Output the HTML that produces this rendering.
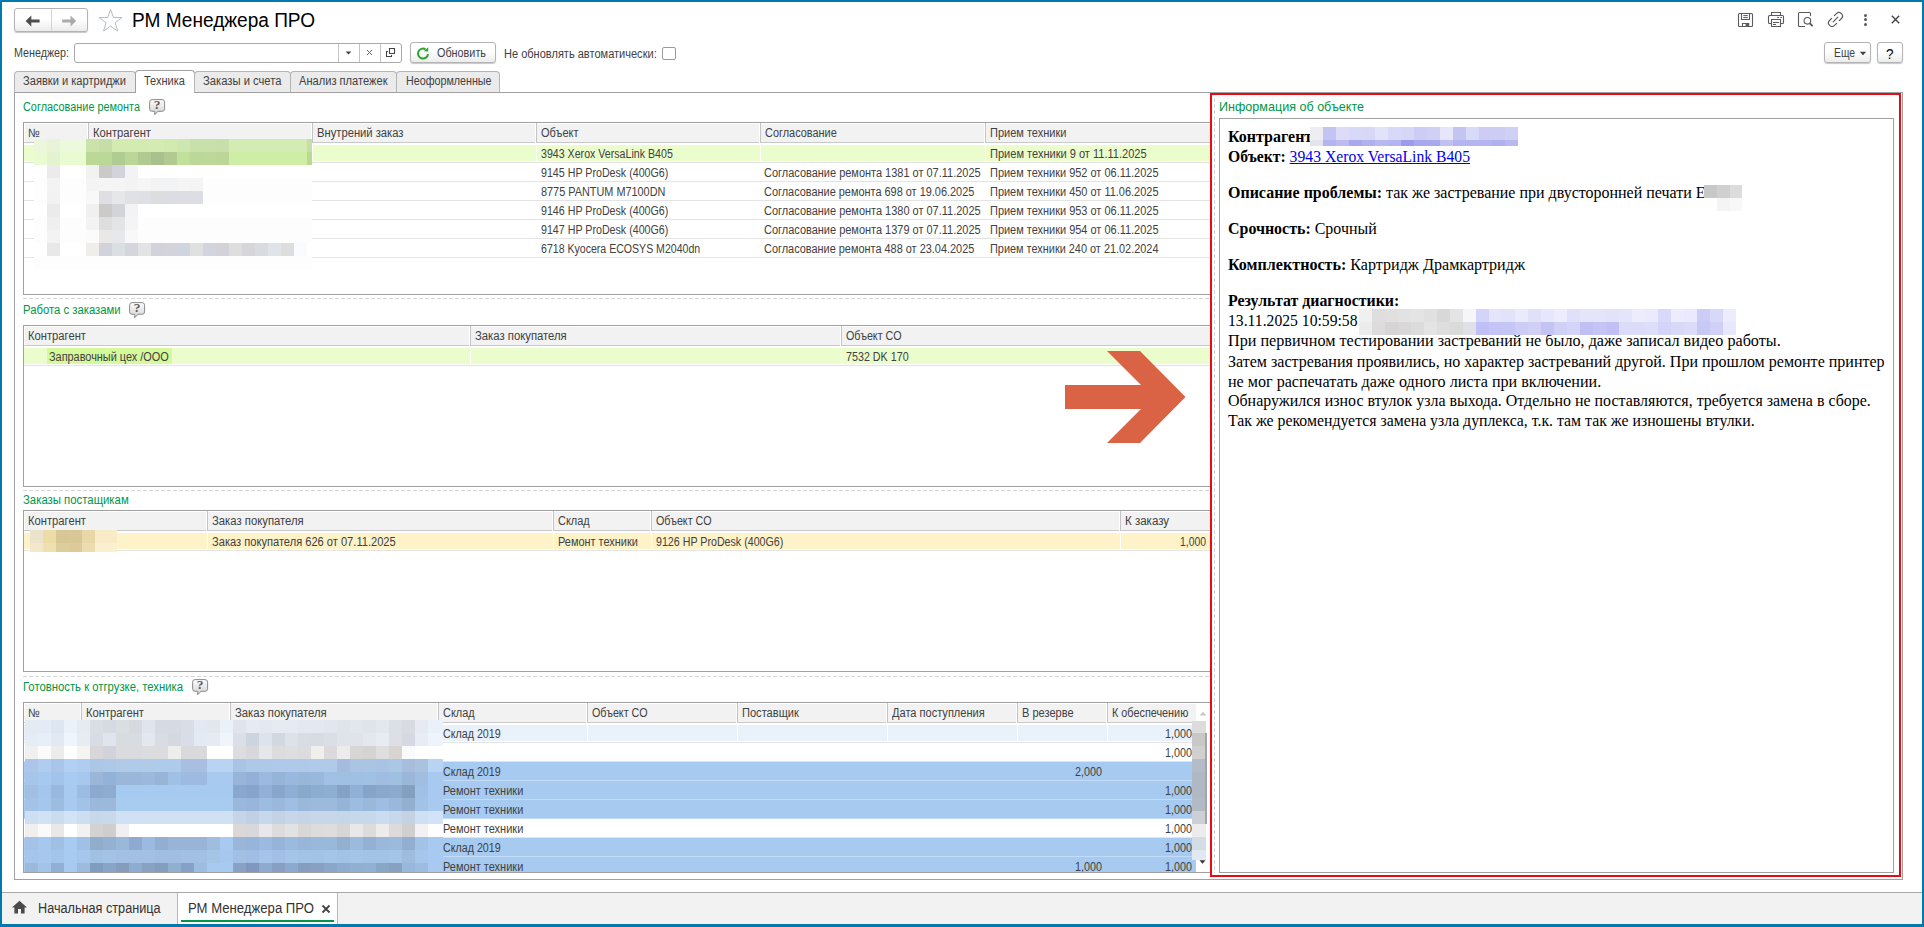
<!DOCTYPE html>
<html lang="ru"><head><meta charset="utf-8"><title>РМ Менеджера ПРО</title>
<style>
html,body{margin:0;padding:0;}
body{width:1924px;height:927px;overflow:hidden;background:#fff;font-family:"Liberation Sans",sans-serif;font-size:11px;color:#333;}
#root{position:relative;width:1924px;height:927px;overflow:hidden;background:#fff;}
#root div, #root svg{position:absolute;box-sizing:border-box;}
.t{white-space:nowrap;}
.btn{border:1px solid #b3b3b3;border-radius:3px;background:linear-gradient(#ffffff,#ffffff 45%,#ececec);box-shadow:0 1px 1px rgba(0,0,0,.22);}
a{color:#0000ee;text-decoration:underline;}
</style></head><body><div id="root">

<div style="left:0px;top:0px;width:1924px;height:2px;background:#0079ae"></div>
<div style="left:0px;top:0px;width:2px;height:927px;background:#0079ae"></div>
<div style="left:1922px;top:0px;width:2px;height:927px;background:#0079ae"></div>
<div style="left:0px;top:924px;width:1924px;height:3px;background:#0079ae"></div>
<div class="btn" style="left:14px;top:8px;width:74px;height:24px;"></div>
<div style="left:51px;top:9px;width:1px;height:22px;background:#d4d4d4"></div>
<svg style="left:25px;top:14.5px" width="16" height="12" viewBox="0 0 16 12"><path d="M0.6 6 L6.3 0.4 V4.6 H14.6 V7.4 H6.3 V11.6 Z" fill="#4d4d4d"/></svg>
<svg style="left:61px;top:14.5px" width="16" height="12" viewBox="0 0 16 12"><path d="M15.2 6 L9.5 0.4 V4.6 H1.2 V7.4 H9.5 V11.6 Z" fill="#ababab"/></svg>
<svg style="left:98px;top:8px" width="26" height="26" viewBox="0 0 26 26"><path d="M12.60 1.30 L15.42 9.42 L24.01 9.59 L17.17 14.78 L19.65 23.01 L12.60 18.10 L5.55 23.01 L8.03 14.78 L1.19 9.59 L9.78 9.42 Z" fill="#fff" stroke="#b4bcc3" stroke-width="1"/></svg>
<div class="t" style="left:132px;top:9px;font-size:20px;line-height:22px;color:#000;transform:scaleX(0.9537);transform-origin:0 0;">РМ Менеджера ПРО</div>
<svg style="left:1737px;top:12px" width="17" height="16" viewBox="0 0 17 16" fill="none" stroke="#5a5a5a" stroke-width="1.1"><path d="M2.5 1.5 H14.5 Q15.5 1.5 15.5 2.5 V13.5 Q15.5 14.5 14.5 14.5 H2.5 Q1.5 14.5 1.5 13.5 V2.5 Q1.5 1.5 2.5 1.5 Z"/><path d="M4.5 1.5 V7.5 H12.5 V1.5"/><path d="M6.3 3.6 H10.8 M6.3 5.6 H10.8" stroke-width="1"/><path d="M5.5 14.5 V11.5 H11.7 V14.5"/><rect x="8.6" y="11.5" width="3.1" height="3" fill="#5a5a5a" stroke="none"/></svg>
<svg style="left:1767px;top:11px" width="18" height="17" viewBox="0 0 18 17" fill="none" stroke="#5a5a5a" stroke-width="1.1"><path d="M4.5 4.5 V1.5 H13.5 V4.5"/><path d="M4.5 12.5 H2.5 Q1.5 12.5 1.5 11.5 V5.5 Q1.5 4.5 2.5 4.5 H15.5 Q16.5 4.5 16.5 5.5 V11.5 Q16.5 12.5 15.5 12.5 H13.5"/><path d="M4.5 8.5 H13.5 V15.5 H4.5 Z"/><path d="M6 11.5 H12 M6 13.5 H9" stroke-width="1"/><path d="M10.2 6.5 H12 M13.3 6.5 H15" stroke-width="1"/></svg>
<svg style="left:1797px;top:11px" width="17" height="17" viewBox="0 0 17 17" fill="none" stroke="#5a5a5a" stroke-width="1.1"><path d="M8 15.5 H2.5 Q1.5 15.5 1.5 14.5 V2.5 Q1.5 1.5 2.5 1.5 H12.5 Q13.5 1.5 13.5 2.5 V5"/><circle cx="10.4" cy="9.8" r="3.3"/><path d="M12.8 12.3 L15.6 15.2" stroke-width="1.8"/></svg>
<svg style="left:1826px;top:10px" width="19" height="19" viewBox="0 0 19 19" fill="none" stroke="#5a5a5a" stroke-width="1.2" stroke-linecap="round" stroke-linejoin="round"><g transform="rotate(-45 9.5 9.5)"><path d="M7.6 6 H4.6 Q1.1 6 1.1 9.5 Q1.1 13 4.6 13 H7.6"/><path d="M11.4 6 H14.4 Q17.9 6 17.9 9.5 Q17.9 13 14.4 13 H11.4"/><path d="M6.2 9.5 H12.8"/></g></svg>
<div style="left:1864px;top:14px;width:3px;height:3px;background:#5a5a5a;border-radius:50%"></div>
<div style="left:1864px;top:18px;width:3px;height:3px;background:#5a5a5a;border-radius:50%"></div>
<div style="left:1864px;top:23px;width:3px;height:3px;background:#5a5a5a;border-radius:50%"></div>
<svg style="left:1890px;top:14px" width="11" height="11" viewBox="0 0 11 11" stroke="#444" stroke-width="1.4" fill="none"><path d="M1.8 1.8 L9.2 9.2 M9.2 1.8 L1.8 9.2"/></svg>
<div class="t" style="left:14px;top:46px;font-size:12px;line-height:14px;color:#414141;transform:scaleX(0.8934);transform-origin:0 0;">Менеджер:</div>
<div style="left:74px;top:43px;width:328px;height:20px;border:1px solid #a9a9a9;border-radius:3px;background:#fff;"></div>
<div style="left:338px;top:44px;width:1px;height:18px;background:#c4c4c4"></div>
<div style="left:359px;top:44px;width:1px;height:18px;background:#c4c4c4"></div>
<div style="left:380px;top:44px;width:1px;height:18px;background:#c4c4c4"></div>
<svg style="left:345px;top:51px" width="7" height="4" viewBox="0 0 7 4"><path d="M0.6 0.4 H6.4 L3.5 3.6 Z" fill="#444"/></svg>
<svg style="left:366px;top:49px" width="7" height="7" viewBox="0 0 7 7" stroke="#666" stroke-width="1"><path d="M1 1 L6 6 M6 1 L1 6"/></svg>
<svg style="left:385px;top:47px" width="11" height="11" viewBox="0 0 11 11" fill="none" stroke="#444" stroke-width="1.1"><path d="M4.5 1.5 H9.5 V6.5 H4.5 Z"/><path d="M3 4.5 H1.5 V9.5 H6.5 V8"/></svg>
<div class="btn" style="left:410px;top:42px;width:86px;height:21px;"></div>
<svg style="left:415px;top:45.5px" width="16" height="16" viewBox="0 0 16 16" fill="none"><path d="M12.98 8.04 A5 5 0 1 1 10.5 3.27" stroke="#2ba42f" stroke-width="2"/><path d="M8.9 5.2 L13.2 5.6 L13.2 1.3 Z" fill="#2ba42f"/></svg>
<div class="t" style="left:437px;top:46px;font-size:12px;line-height:14px;color:#414141;transform:scaleX(0.9017);transform-origin:0 0;">Обновить</div>
<div class="t" style="left:504.3px;top:47px;font-size:12px;line-height:14px;color:#414141;transform:scaleX(0.9193);transform-origin:0 0;">Не обновлять автоматически:</div>
<div style="left:662px;top:47px;width:14px;height:13px;border:1px solid #9a9a9a;border-radius:2px;background:#fff;"></div>
<div class="btn" style="left:1824px;top:42px;width:47px;height:21px;"></div>
<div class="t" style="left:1834px;top:46px;font-size:12px;line-height:14px;color:#414141;transform:scaleX(0.8599);transform-origin:0 0;">Еще</div>
<svg style="left:1859px;top:51px" width="8" height="5" viewBox="0 0 8 5"><path d="M0.8 0.8 H7.2 L4 4.2 Z" fill="#444"/></svg>
<div class="btn" style="left:1877px;top:42px;width:26px;height:21px;"></div>
<div class="t" style="left:1886px;top:45px;font-size:15px;line-height:17px;color:#000;transform:scaleX(0.9000);transform-origin:0 0;">?</div>
<div style="left:14px;top:92px;width:1889px;height:788px;border:1px solid #a0a0a0;background:#fff;"></div>
<div style="left:14px;top:71px;width:122px;height:22px;border:1px solid #b4b4b4;border-bottom:1px solid #a0a0a0;border-radius:4px 4px 0 0;background:#ebebeb;"></div>
<div style="left:135px;top:70px;width:60px;height:23px;border:1px solid #a0a0a0;border-bottom:none;border-radius:4px 4px 0 0;background:#fff;"></div>
<div style="left:194px;top:71px;width:97px;height:22px;border:1px solid #b4b4b4;border-bottom:1px solid #a0a0a0;border-radius:4px 4px 0 0;background:#ebebeb;"></div>
<div style="left:290px;top:71px;width:107px;height:22px;border:1px solid #b4b4b4;border-bottom:1px solid #a0a0a0;border-radius:4px 4px 0 0;background:#ebebeb;"></div>
<div style="left:396px;top:71px;width:104px;height:22px;border:1px solid #b4b4b4;border-bottom:1px solid #a0a0a0;border-radius:4px 4px 0 0;background:#ebebeb;"></div>
<div class="t" style="left:23px;top:74px;font-size:12px;line-height:14px;color:#414141;transform:scaleX(0.9252);transform-origin:0 0;">Заявки и картриджи</div>
<div class="t" style="left:144px;top:74px;font-size:12px;line-height:14px;color:#414141;transform:scaleX(0.9194);transform-origin:0 0;">Техника</div>
<div class="t" style="left:203px;top:74px;font-size:12px;line-height:14px;color:#414141;transform:scaleX(0.9356);transform-origin:0 0;">Заказы и счета</div>
<div class="t" style="left:299px;top:74px;font-size:12px;line-height:14px;color:#414141;transform:scaleX(0.9256);transform-origin:0 0;">Анализ платежек</div>
<div class="t" style="left:405.5px;top:74px;font-size:12px;line-height:14px;color:#414141;transform:scaleX(0.8932);transform-origin:0 0;">Неоформленные</div>
<div class="t" style="left:23px;top:100px;font-size:12px;line-height:14px;color:#009646;transform:scaleX(0.9061);transform-origin:0 0;">Согласование ремонта</div>
<svg style="left:149px;top:99px" width="17" height="17" viewBox="0 0 17 17"><defs><linearGradient id="hg14999" x1="0" y1="0" x2="0" y2="1"><stop offset="0" stop-color="#fdfdfd"/><stop offset="1" stop-color="#d2d2d2"/></linearGradient></defs><path d="M3 0.6 H13 Q15.6 0.6 15.6 3.2 V9.8 Q15.6 12.3 13 12.3 H8.8 Q7.6 14.6 5.4 15.6 Q6 14 5.8 12.3 H3 Q0.6 12.3 0.6 9.8 V3.2 Q0.6 0.6 3 0.6 Z" fill="url(#hg14999)" stroke="#8a8a8a" stroke-width="1"/><text x="8.2" y="10.4" text-anchor="middle" font-family="Liberation Serif, serif" font-weight="bold" font-size="13.5" fill="#5e5e5e">?</text></svg>
<div style="left:23px;top:122px;width:1189px;height:173px;border:1px solid #a0a0a0;background:#fff;"></div>
<div style="left:25px;top:124px;width:1185px;height:18px;background:#f2f2f2"></div>
<div style="left:24px;top:142px;width:1186px;height:1px;background:#c9c9c9"></div>
<div class="t" style="left:28px;top:126px;font-size:12px;line-height:14px;color:#414141;transform:scaleX(0.9200);transform-origin:0 0;">№</div>
<div style="left:87px;top:123px;width:1px;height:20px;background:#fff"></div>
<div style="left:88px;top:123px;width:1px;height:20px;background:#c4c4c4"></div>
<div class="t" style="left:92.5px;top:126px;font-size:12px;line-height:14px;color:#414141;transform:scaleX(0.9348);transform-origin:0 0;">Контрагент</div>
<div style="left:311px;top:123px;width:1px;height:20px;background:#fff"></div>
<div style="left:312px;top:123px;width:1px;height:20px;background:#c4c4c4"></div>
<div class="t" style="left:316.5px;top:126px;font-size:12px;line-height:14px;color:#414141;transform:scaleX(0.9343);transform-origin:0 0;">Внутрений заказ</div>
<div style="left:535px;top:123px;width:1px;height:20px;background:#fff"></div>
<div style="left:536px;top:123px;width:1px;height:20px;background:#c4c4c4"></div>
<div class="t" style="left:540.5px;top:126px;font-size:12px;line-height:14px;color:#414141;transform:scaleX(0.9174);transform-origin:0 0;">Объект</div>
<div style="left:759px;top:123px;width:1px;height:20px;background:#fff"></div>
<div style="left:760px;top:123px;width:1px;height:20px;background:#c4c4c4"></div>
<div class="t" style="left:764.5px;top:126px;font-size:12px;line-height:14px;color:#414141;transform:scaleX(0.9105);transform-origin:0 0;">Согласование</div>
<div style="left:984px;top:123px;width:1px;height:20px;background:#fff"></div>
<div style="left:985px;top:123px;width:1px;height:20px;background:#c4c4c4"></div>
<div class="t" style="left:989.5px;top:126px;font-size:12px;line-height:14px;color:#414141;transform:scaleX(0.9169);transform-origin:0 0;">Прием техники</div>
<div style="left:24px;top:145px;width:1186px;height:16px;background:#ebfdcd"></div>
<div style="left:24px;top:162px;width:1186px;height:1px;background:#e3e3e3"></div>
<div style="left:88px;top:145px;width:1px;height:17px;background:#fff"></div>
<div style="left:312px;top:145px;width:1px;height:17px;background:#fff"></div>
<div style="left:536px;top:145px;width:1px;height:17px;background:#fff"></div>
<div style="left:760px;top:145px;width:1px;height:17px;background:#fff"></div>
<div style="left:985px;top:145px;width:1px;height:17px;background:#fff"></div>
<div class="t" style="left:541.2px;top:147px;font-size:12px;line-height:14px;color:#414141;transform:scaleX(0.8859);transform-origin:0 0;">3943 Xerox VersaLink B405</div>
<div class="t" style="left:990.3px;top:147px;font-size:12px;line-height:14px;color:#414141;transform:scaleX(0.9202);transform-origin:0 0;">Прием техники 9 от 11.11.2025</div>
<div style="left:24px;top:181px;width:1186px;height:1px;background:#e3e3e3"></div>
<div class="t" style="left:541.2px;top:166px;font-size:12px;line-height:14px;color:#414141;transform:scaleX(0.8890);transform-origin:0 0;">9145 HP ProDesk (400G6)</div>
<div class="t" style="left:764.4px;top:166px;font-size:12px;line-height:14px;color:#414141;transform:scaleX(0.9143);transform-origin:0 0;">Согласование ремонта 1381 от 07.11.2025</div>
<div class="t" style="left:990.3px;top:166px;font-size:12px;line-height:14px;color:#414141;transform:scaleX(0.9137);transform-origin:0 0;">Прием техники 952 от 06.11.2025</div>
<div style="left:24px;top:200px;width:1186px;height:1px;background:#e3e3e3"></div>
<div class="t" style="left:541.2px;top:185px;font-size:12px;line-height:14px;color:#414141;transform:scaleX(0.9069);transform-origin:0 0;">8775 PANTUM M7100DN</div>
<div class="t" style="left:764.4px;top:185px;font-size:12px;line-height:14px;color:#414141;transform:scaleX(0.9099);transform-origin:0 0;">Согласование ремонта 698 от 19.06.2025</div>
<div class="t" style="left:990.3px;top:185px;font-size:12px;line-height:14px;color:#414141;transform:scaleX(0.9137);transform-origin:0 0;">Прием техники 450 от 11.06.2025</div>
<div style="left:24px;top:219px;width:1186px;height:1px;background:#e3e3e3"></div>
<div class="t" style="left:541.2px;top:204px;font-size:12px;line-height:14px;color:#414141;transform:scaleX(0.8890);transform-origin:0 0;">9146 HP ProDesk (400G6)</div>
<div class="t" style="left:764.4px;top:204px;font-size:12px;line-height:14px;color:#414141;transform:scaleX(0.9143);transform-origin:0 0;">Согласование ремонта 1380 от 07.11.2025</div>
<div class="t" style="left:990.3px;top:204px;font-size:12px;line-height:14px;color:#414141;transform:scaleX(0.9137);transform-origin:0 0;">Прием техники 953 от 06.11.2025</div>
<div style="left:24px;top:238px;width:1186px;height:1px;background:#e3e3e3"></div>
<div class="t" style="left:541.2px;top:223px;font-size:12px;line-height:14px;color:#414141;transform:scaleX(0.8890);transform-origin:0 0;">9147 HP ProDesk (400G6)</div>
<div class="t" style="left:764.4px;top:223px;font-size:12px;line-height:14px;color:#414141;transform:scaleX(0.9143);transform-origin:0 0;">Согласование ремонта 1379 от 07.11.2025</div>
<div class="t" style="left:990.3px;top:223px;font-size:12px;line-height:14px;color:#414141;transform:scaleX(0.9137);transform-origin:0 0;">Прием техники 954 от 06.11.2025</div>
<div style="left:24px;top:257px;width:1186px;height:1px;background:#e3e3e3"></div>
<div class="t" style="left:541.2px;top:242px;font-size:12px;line-height:14px;color:#414141;transform:scaleX(0.8806);transform-origin:0 0;">6718 Kyocera ECOSYS M2040dn</div>
<div class="t" style="left:764.4px;top:242px;font-size:12px;line-height:14px;color:#414141;transform:scaleX(0.9099);transform-origin:0 0;">Согласование ремонта 488 от 23.04.2025</div>
<div class="t" style="left:990.3px;top:242px;font-size:12px;line-height:14px;color:#414141;transform:scaleX(0.9093);transform-origin:0 0;">Прием техники 240 от 21.02.2024</div>
<div style="left:34px;top:139px;width:13px;height:13px;background:#ebf6dd"></div>
<div style="left:47px;top:139px;width:13px;height:13px;background:#e9f3da"></div>
<div style="left:60px;top:139px;width:26px;height:13px;background:#edf9dc"></div>
<div style="left:86px;top:139px;width:13px;height:13px;background:#cbe2ab"></div>
<div style="left:99px;top:139px;width:13px;height:13px;background:#c6dda8"></div>
<div style="left:112px;top:139px;width:39px;height:13px;background:#d3ebb0"></div>
<div style="left:151px;top:139px;width:13px;height:13px;background:#d4ebb2"></div>
<div style="left:164px;top:139px;width:13px;height:13px;background:#d2e9b0"></div>
<div style="left:177px;top:139px;width:13px;height:13px;background:#cee6b0"></div>
<div style="left:190px;top:139px;width:26px;height:13px;background:#c9e0ab"></div>
<div style="left:216px;top:139px;width:13px;height:13px;background:#c8dfaa"></div>
<div style="left:229px;top:139px;width:78px;height:13px;background:#d4ebb3"></div>
<div style="left:307px;top:139px;width:5px;height:13px;background:#c5dfa4"></div>
<div style="left:34px;top:152px;width:13px;height:13px;background:#e9fbd0"></div>
<div style="left:47px;top:152px;width:13px;height:13px;background:#e4f3cf"></div>
<div style="left:60px;top:152px;width:26px;height:13px;background:#e9fbd0"></div>
<div style="left:86px;top:152px;width:13px;height:13px;background:#bcd897"></div>
<div style="left:99px;top:152px;width:13px;height:13px;background:#bbd996"></div>
<div style="left:112px;top:152px;width:13px;height:13px;background:#b0cd91"></div>
<div style="left:125px;top:152px;width:13px;height:13px;background:#bbd697"></div>
<div style="left:138px;top:152px;width:13px;height:13px;background:#b0ca93"></div>
<div style="left:151px;top:152px;width:13px;height:13px;background:#a8c18f"></div>
<div style="left:164px;top:152px;width:13px;height:13px;background:#b2ca92"></div>
<div style="left:177px;top:152px;width:13px;height:13px;background:#c0e09c"></div>
<div style="left:190px;top:152px;width:13px;height:13px;background:#bcd898"></div>
<div style="left:203px;top:152px;width:13px;height:13px;background:#bcd99a"></div>
<div style="left:216px;top:152px;width:13px;height:13px;background:#bbd698"></div>
<div style="left:229px;top:152px;width:78px;height:13px;background:#cdeea4"></div>
<div style="left:307px;top:152px;width:5px;height:13px;background:#b9db8c"></div>
<div style="left:34px;top:165px;width:13px;height:13px;background:#ffffff"></div>
<div style="left:47px;top:165px;width:13px;height:13px;background:#ebebeb"></div>
<div style="left:60px;top:165px;width:26px;height:13px;background:#ffffff"></div>
<div style="left:86px;top:165px;width:13px;height:13px;background:#f2f2f2"></div>
<div style="left:99px;top:165px;width:13px;height:13px;background:#cbcac8"></div>
<div style="left:112px;top:165px;width:13px;height:13px;background:#d2d4d9"></div>
<div style="left:125px;top:165px;width:13px;height:13px;background:#f3f2f4"></div>
<div style="left:138px;top:165px;width:174px;height:13px;background:#ffffff"></div>
<div style="left:34px;top:178px;width:13px;height:13px;background:#fdfdfd"></div>
<div style="left:47px;top:178px;width:13px;height:13px;background:#f3f3f3"></div>
<div style="left:60px;top:178px;width:26px;height:13px;background:#fdfdfd"></div>
<div style="left:86px;top:178px;width:13px;height:13px;background:#f4f4f4"></div>
<div style="left:99px;top:178px;width:26px;height:13px;background:#f5f5f5"></div>
<div style="left:125px;top:178px;width:13px;height:13px;background:#f3f3f3"></div>
<div style="left:138px;top:178px;width:13px;height:13px;background:#f6f6f6"></div>
<div style="left:151px;top:178px;width:13px;height:13px;background:#f3f3f4"></div>
<div style="left:164px;top:178px;width:13px;height:13px;background:#f2f3f5"></div>
<div style="left:177px;top:178px;width:13px;height:13px;background:#f5f5f5"></div>
<div style="left:190px;top:178px;width:13px;height:13px;background:#f4f4f4"></div>
<div style="left:203px;top:178px;width:109px;height:13px;background:#fdfdfd"></div>
<div style="left:34px;top:191px;width:13px;height:13px;background:#fdfdfd"></div>
<div style="left:47px;top:191px;width:13px;height:13px;background:#f2f2f2"></div>
<div style="left:60px;top:191px;width:26px;height:13px;background:#fdfdfd"></div>
<div style="left:86px;top:191px;width:13px;height:13px;background:#f8f8f8"></div>
<div style="left:99px;top:191px;width:13px;height:13px;background:#dedee3"></div>
<div style="left:112px;top:191px;width:13px;height:13px;background:#e6e7e8"></div>
<div style="left:125px;top:191px;width:13px;height:13px;background:#e0e1e4"></div>
<div style="left:138px;top:191px;width:13px;height:13px;background:#dfe0e6"></div>
<div style="left:151px;top:191px;width:13px;height:13px;background:#dddde0"></div>
<div style="left:164px;top:191px;width:13px;height:13px;background:#dcdde2"></div>
<div style="left:177px;top:191px;width:26px;height:13px;background:#dddee3"></div>
<div style="left:203px;top:191px;width:109px;height:13px;background:#fdfdfd"></div>
<div style="left:34px;top:204px;width:13px;height:13px;background:#ffffff"></div>
<div style="left:47px;top:204px;width:13px;height:13px;background:#ebebeb"></div>
<div style="left:60px;top:204px;width:26px;height:13px;background:#ffffff"></div>
<div style="left:86px;top:204px;width:13px;height:13px;background:#f0f0f0"></div>
<div style="left:99px;top:204px;width:13px;height:13px;background:#cbcac8"></div>
<div style="left:112px;top:204px;width:13px;height:13px;background:#d2d4d9"></div>
<div style="left:125px;top:204px;width:13px;height:13px;background:#f3f2f4"></div>
<div style="left:138px;top:204px;width:174px;height:13px;background:#ffffff"></div>
<div style="left:34px;top:217px;width:13px;height:13px;background:#fdfdfd"></div>
<div style="left:47px;top:217px;width:13px;height:13px;background:#efefef"></div>
<div style="left:60px;top:217px;width:26px;height:13px;background:#fdfdfd"></div>
<div style="left:86px;top:217px;width:13px;height:13px;background:#f3f3f3"></div>
<div style="left:99px;top:217px;width:13px;height:13px;background:#dedede"></div>
<div style="left:112px;top:217px;width:13px;height:13px;background:#e3e4e6"></div>
<div style="left:125px;top:217px;width:13px;height:13px;background:#f4f4f4"></div>
<div style="left:138px;top:217px;width:174px;height:13px;background:#fdfdfd"></div>
<div style="left:34px;top:230px;width:13px;height:13px;background:#fdfdfd"></div>
<div style="left:47px;top:230px;width:13px;height:13px;background:#f3f3f3"></div>
<div style="left:60px;top:230px;width:26px;height:13px;background:#fdfdfd"></div>
<div style="left:86px;top:230px;width:13px;height:13px;background:#fbfbfb"></div>
<div style="left:99px;top:230px;width:13px;height:13px;background:#eae8e6"></div>
<div style="left:112px;top:230px;width:13px;height:13px;background:#e6e8ec"></div>
<div style="left:125px;top:230px;width:13px;height:13px;background:#f8f8f8"></div>
<div style="left:138px;top:230px;width:174px;height:13px;background:#fdfdfd"></div>
<div style="left:34px;top:243px;width:13px;height:13px;background:#ffffff"></div>
<div style="left:47px;top:243px;width:13px;height:13px;background:#e8e8e8"></div>
<div style="left:60px;top:243px;width:26px;height:13px;background:#ffffff"></div>
<div style="left:86px;top:243px;width:13px;height:13px;background:#f0eeea"></div>
<div style="left:99px;top:243px;width:13px;height:13px;background:#d2d2da"></div>
<div style="left:112px;top:243px;width:13px;height:13px;background:#dadfe4"></div>
<div style="left:125px;top:243px;width:13px;height:13px;background:#d4d6dc"></div>
<div style="left:138px;top:243px;width:13px;height:13px;background:#e2e3e5"></div>
<div style="left:151px;top:243px;width:13px;height:13px;background:#d2d3da"></div>
<div style="left:164px;top:243px;width:13px;height:13px;background:#d3d4da"></div>
<div style="left:177px;top:243px;width:13px;height:13px;background:#d0d4de"></div>
<div style="left:190px;top:243px;width:13px;height:13px;background:#e0e0e0"></div>
<div style="left:203px;top:243px;width:13px;height:13px;background:#d2d5de"></div>
<div style="left:216px;top:243px;width:13px;height:13px;background:#d2d2d8"></div>
<div style="left:229px;top:243px;width:13px;height:13px;background:#dedede"></div>
<div style="left:242px;top:243px;width:13px;height:13px;background:#d6d6da"></div>
<div style="left:255px;top:243px;width:13px;height:13px;background:#dadbdf"></div>
<div style="left:268px;top:243px;width:13px;height:13px;background:#e0e3e8"></div>
<div style="left:281px;top:243px;width:13px;height:13px;background:#dddddd"></div>
<div style="left:294px;top:243px;width:13px;height:13px;background:#fafbfe"></div>
<div style="left:307px;top:243px;width:5px;height:13px;background:#ffffff"></div>
<div style="left:34px;top:256px;width:278px;height:13px;background:#fdfdfd"></div>
<div style="left:23px;top:298px;width:1187px;height:1px;background:repeating-linear-gradient(90deg,#d6d6d6 0,#d6d6d6 4px,transparent 4px,transparent 6px);"></div>
<div class="t" style="left:23px;top:303px;font-size:12px;line-height:14px;color:#009646;transform:scaleX(0.9419);transform-origin:0 0;">Работа с заказами</div>
<svg style="left:129px;top:302px" width="17" height="17" viewBox="0 0 17 17"><defs><linearGradient id="hg129302" x1="0" y1="0" x2="0" y2="1"><stop offset="0" stop-color="#fdfdfd"/><stop offset="1" stop-color="#d2d2d2"/></linearGradient></defs><path d="M3 0.6 H13 Q15.6 0.6 15.6 3.2 V9.8 Q15.6 12.3 13 12.3 H8.8 Q7.6 14.6 5.4 15.6 Q6 14 5.8 12.3 H3 Q0.6 12.3 0.6 9.8 V3.2 Q0.6 0.6 3 0.6 Z" fill="url(#hg129302)" stroke="#8a8a8a" stroke-width="1"/><text x="8.2" y="10.4" text-anchor="middle" font-family="Liberation Serif, serif" font-weight="bold" font-size="13.5" fill="#5e5e5e">?</text></svg>
<div style="left:23px;top:325px;width:1189px;height:162px;border:1px solid #a0a0a0;background:#fff;"></div>
<div style="left:25px;top:327px;width:1185px;height:18px;background:#f2f2f2"></div>
<div style="left:24px;top:345px;width:1186px;height:1px;background:#c9c9c9"></div>
<div class="t" style="left:28px;top:329px;font-size:12px;line-height:14px;color:#414141;transform:scaleX(0.9348);transform-origin:0 0;">Контрагент</div>
<div style="left:469px;top:326px;width:1px;height:20px;background:#fff"></div>
<div style="left:470px;top:326px;width:1px;height:20px;background:#c4c4c4"></div>
<div class="t" style="left:474.5px;top:329px;font-size:12px;line-height:14px;color:#414141;transform:scaleX(0.9413);transform-origin:0 0;">Заказ покупателя</div>
<div style="left:840px;top:326px;width:1px;height:20px;background:#fff"></div>
<div style="left:841px;top:326px;width:1px;height:20px;background:#c4c4c4"></div>
<div class="t" style="left:845.5px;top:329px;font-size:12px;line-height:14px;color:#414141;transform:scaleX(0.8961);transform-origin:0 0;">Объект СО</div>
<div style="left:24px;top:348px;width:1186px;height:16px;background:#ebfdcd"></div>
<div style="left:24px;top:365px;width:1186px;height:1px;background:#e3e3e3"></div>
<div style="left:470px;top:348px;width:1px;height:17px;background:#fff"></div>
<div style="left:841px;top:348px;width:1px;height:17px;background:#fff"></div>
<div style="left:47px;top:348px;width:125px;height:16px;background:#d5f99b"></div>
<div class="t" style="left:48.8px;top:350px;font-size:12px;line-height:14px;color:#414141;transform:scaleX(0.9083);transform-origin:0 0;">Заправочный цех /ООО</div>
<div class="t" style="left:845.7px;top:350px;font-size:12px;line-height:14px;color:#414141;transform:scaleX(0.8935);transform-origin:0 0;">7532 DK 170</div>
<div style="left:23px;top:490px;width:1187px;height:1px;background:repeating-linear-gradient(90deg,#d6d6d6 0,#d6d6d6 4px,transparent 4px,transparent 6px);"></div>
<div class="t" style="left:23px;top:493px;font-size:12px;line-height:14px;color:#009646;transform:scaleX(0.9467);transform-origin:0 0;">Заказы постащикам</div>
<div style="left:23px;top:510px;width:1189px;height:162px;border:1px solid #a0a0a0;background:#fff;"></div>
<div style="left:25px;top:512px;width:1185px;height:18px;background:#f2f2f2"></div>
<div style="left:24px;top:530px;width:1186px;height:1px;background:#c9c9c9"></div>
<div class="t" style="left:28px;top:514px;font-size:12px;line-height:14px;color:#414141;transform:scaleX(0.9348);transform-origin:0 0;">Контрагент</div>
<div style="left:206px;top:511px;width:1px;height:20px;background:#fff"></div>
<div style="left:207px;top:511px;width:1px;height:20px;background:#c4c4c4"></div>
<div class="t" style="left:211.5px;top:514px;font-size:12px;line-height:14px;color:#414141;transform:scaleX(0.9413);transform-origin:0 0;">Заказ покупателя</div>
<div style="left:552px;top:511px;width:1px;height:20px;background:#fff"></div>
<div style="left:553px;top:511px;width:1px;height:20px;background:#c4c4c4"></div>
<div class="t" style="left:557.5px;top:514px;font-size:12px;line-height:14px;color:#414141;transform:scaleX(0.9098);transform-origin:0 0;">Склад</div>
<div style="left:650px;top:511px;width:1px;height:20px;background:#fff"></div>
<div style="left:651px;top:511px;width:1px;height:20px;background:#c4c4c4"></div>
<div class="t" style="left:655.5px;top:514px;font-size:12px;line-height:14px;color:#414141;transform:scaleX(0.8961);transform-origin:0 0;">Объект СО</div>
<div style="left:1119px;top:511px;width:1px;height:20px;background:#fff"></div>
<div style="left:1120px;top:511px;width:1px;height:20px;background:#c4c4c4"></div>
<div class="t" style="left:1124.5px;top:514px;font-size:12px;line-height:14px;color:#414141;transform:scaleX(0.9603);transform-origin:0 0;">К заказу</div>
<div style="left:24px;top:533px;width:1186px;height:16px;background:#fef2c8"></div>
<div style="left:24px;top:550px;width:1186px;height:1px;background:#e3e3e3"></div>
<div style="left:207px;top:533px;width:1px;height:17px;background:#fff"></div>
<div style="left:553px;top:533px;width:1px;height:17px;background:#fff"></div>
<div style="left:651px;top:533px;width:1px;height:17px;background:#fff"></div>
<div style="left:1120px;top:533px;width:1px;height:17px;background:#fff"></div>
<div class="t" style="left:212.2px;top:535px;font-size:12px;line-height:14px;color:#414141;transform:scaleX(0.9254);transform-origin:0 0;">Заказ покупателя 626 от 07.11.2025</div>
<div class="t" style="left:558.2px;top:535px;font-size:12px;line-height:14px;color:#414141;transform:scaleX(0.9110);transform-origin:0 0;">Ремонт техники</div>
<div class="t" style="left:656px;top:535px;font-size:12px;line-height:14px;color:#414141;transform:scaleX(0.8890);transform-origin:0 0;">9126 HP ProDesk (400G6)</div>
<div class="t" style="right:718px;top:535px;font-size:12px;line-height:14px;color:#414141;transform:scaleX(0.8658);transform-origin:100% 0;">1,000</div>
<div style="left:30px;top:530px;width:13px;height:13px;background:#ebe3cc"></div>
<div style="left:43px;top:530px;width:13px;height:13px;background:#ecdca8"></div>
<div style="left:56px;top:530px;width:13px;height:13px;background:#d6c794"></div>
<div style="left:69px;top:530px;width:13px;height:13px;background:#d8c896"></div>
<div style="left:82px;top:530px;width:13px;height:13px;background:#e8d8a8"></div>
<div style="left:95px;top:530px;width:22px;height:13px;background:#f8ecc8"></div>
<div style="left:30px;top:543px;width:13px;height:9px;background:#f2e8cc"></div>
<div style="left:43px;top:543px;width:13px;height:9px;background:#f0e0b0"></div>
<div style="left:56px;top:543px;width:13px;height:9px;background:#dccd9c"></div>
<div style="left:69px;top:543px;width:13px;height:9px;background:#deca98"></div>
<div style="left:82px;top:543px;width:13px;height:9px;background:#ecdcb0"></div>
<div style="left:95px;top:543px;width:22px;height:9px;background:#faf0d0"></div>
<div style="left:23px;top:676px;width:1187px;height:1px;background:repeating-linear-gradient(90deg,#d6d6d6 0,#d6d6d6 4px,transparent 4px,transparent 6px);"></div>
<div class="t" style="left:23px;top:680px;font-size:12px;line-height:14px;color:#009646;transform:scaleX(0.9421);transform-origin:0 0;">Готовность к отгрузке, техника</div>
<svg style="left:192px;top:679px" width="17" height="17" viewBox="0 0 17 17"><defs><linearGradient id="hg192679" x1="0" y1="0" x2="0" y2="1"><stop offset="0" stop-color="#fdfdfd"/><stop offset="1" stop-color="#d2d2d2"/></linearGradient></defs><path d="M3 0.6 H13 Q15.6 0.6 15.6 3.2 V9.8 Q15.6 12.3 13 12.3 H8.8 Q7.6 14.6 5.4 15.6 Q6 14 5.8 12.3 H3 Q0.6 12.3 0.6 9.8 V3.2 Q0.6 0.6 3 0.6 Z" fill="url(#hg192679)" stroke="#8a8a8a" stroke-width="1"/><text x="8.2" y="10.4" text-anchor="middle" font-family="Liberation Serif, serif" font-weight="bold" font-size="13.5" fill="#5e5e5e">?</text></svg>
<div style="left:23px;top:702px;width:1189px;height:171px;border:1px solid #a0a0a0;background:#fff;"></div>
<div style="left:25px;top:704px;width:1171px;height:18px;background:#f2f2f2"></div>
<div style="left:24px;top:722px;width:1172px;height:1px;background:#c9c9c9"></div>
<div class="t" style="left:28px;top:706px;font-size:12px;line-height:14px;color:#414141;transform:scaleX(0.9200);transform-origin:0 0;">№</div>
<div style="left:80px;top:703px;width:1px;height:20px;background:#fff"></div>
<div style="left:81px;top:703px;width:1px;height:20px;background:#c4c4c4"></div>
<div class="t" style="left:85.5px;top:706px;font-size:12px;line-height:14px;color:#414141;transform:scaleX(0.9348);transform-origin:0 0;">Контрагент</div>
<div style="left:229px;top:703px;width:1px;height:20px;background:#fff"></div>
<div style="left:230px;top:703px;width:1px;height:20px;background:#c4c4c4"></div>
<div class="t" style="left:234.5px;top:706px;font-size:12px;line-height:14px;color:#414141;transform:scaleX(0.9413);transform-origin:0 0;">Заказ покупателя</div>
<div style="left:437px;top:703px;width:1px;height:20px;background:#fff"></div>
<div style="left:438px;top:703px;width:1px;height:20px;background:#c4c4c4"></div>
<div class="t" style="left:442.5px;top:706px;font-size:12px;line-height:14px;color:#414141;transform:scaleX(0.9098);transform-origin:0 0;">Склад</div>
<div style="left:586px;top:703px;width:1px;height:20px;background:#fff"></div>
<div style="left:587px;top:703px;width:1px;height:20px;background:#c4c4c4"></div>
<div class="t" style="left:591.5px;top:706px;font-size:12px;line-height:14px;color:#414141;transform:scaleX(0.8961);transform-origin:0 0;">Объект СО</div>
<div style="left:736px;top:703px;width:1px;height:20px;background:#fff"></div>
<div style="left:737px;top:703px;width:1px;height:20px;background:#c4c4c4"></div>
<div class="t" style="left:741.5px;top:706px;font-size:12px;line-height:14px;color:#414141;transform:scaleX(0.9229);transform-origin:0 0;">Поставщик</div>
<div style="left:886px;top:703px;width:1px;height:20px;background:#fff"></div>
<div style="left:887px;top:703px;width:1px;height:20px;background:#c4c4c4"></div>
<div class="t" style="left:891.5px;top:706px;font-size:12px;line-height:14px;color:#414141;transform:scaleX(0.9204);transform-origin:0 0;">Дата поступления</div>
<div style="left:1016px;top:703px;width:1px;height:20px;background:#fff"></div>
<div style="left:1017px;top:703px;width:1px;height:20px;background:#c4c4c4"></div>
<div class="t" style="left:1021.5px;top:706px;font-size:12px;line-height:14px;color:#414141;transform:scaleX(0.9204);transform-origin:0 0;">В резерве</div>
<div style="left:1106px;top:703px;width:1px;height:20px;background:#fff"></div>
<div style="left:1107px;top:703px;width:1px;height:20px;background:#c4c4c4"></div>
<div class="t" style="left:1111.5px;top:706px;font-size:12px;line-height:14px;color:#414141;transform:scaleX(0.9035);transform-origin:0 0;">К обеспечению</div>
<div style="left:24px;top:723px;width:1186px;height:149px;overflow:hidden;">
<div style="left:0px;top:2px;width:1172px;height:16px;background:#e9f1fb"></div>
<div style="left:0px;top:19px;width:1172px;height:1px;background:#e3e3e3"></div>
<div style="left:57px;top:2px;width:1px;height:17px;background:#fff"></div>
<div style="left:206px;top:2px;width:1px;height:17px;background:#fff"></div>
<div style="left:414px;top:2px;width:1px;height:17px;background:#fff"></div>
<div style="left:563px;top:2px;width:1px;height:17px;background:#fff"></div>
<div style="left:713px;top:2px;width:1px;height:17px;background:#fff"></div>
<div style="left:863px;top:2px;width:1px;height:17px;background:#fff"></div>
<div style="left:993px;top:2px;width:1px;height:17px;background:#fff"></div>
<div style="left:1083px;top:2px;width:1px;height:17px;background:#fff"></div>
<div style="left:0px;top:38px;width:1172px;height:1px;background:#e3e3e3"></div>
<div style="left:0px;top:39px;width:1172px;height:18px;background:#a6caf0"></div>
<div style="left:0px;top:57px;width:1172px;height:1px;background:#c3dbf5"></div>
<div style="left:0px;top:58px;width:1172px;height:18px;background:#a6caf0"></div>
<div style="left:0px;top:76px;width:1172px;height:1px;background:#c3dbf5"></div>
<div style="left:0px;top:77px;width:1172px;height:18px;background:#a6caf0"></div>
<div style="left:0px;top:95px;width:1172px;height:1px;background:#c3dbf5"></div>
<div style="left:0px;top:114px;width:1172px;height:1px;background:#e3e3e3"></div>
<div style="left:0px;top:115px;width:1172px;height:18px;background:#a6caf0"></div>
<div style="left:0px;top:133px;width:1172px;height:1px;background:#c3dbf5"></div>
<div style="left:0px;top:134px;width:1172px;height:18px;background:#a6caf0"></div>
<div style="left:0px;top:152px;width:1172px;height:1px;background:#c3dbf5"></div>
</div>
<div class="t" style="left:443px;top:727px;font-size:12px;line-height:14px;color:#414141;transform:scaleX(0.8909);transform-origin:0 0;">Склад 2019</div>
<div class="t" style="right:732px;top:727px;font-size:12px;line-height:14px;color:#414141;transform:scaleX(0.8991);transform-origin:100% 0;">1,000</div>
<div class="t" style="right:732px;top:746px;font-size:12px;line-height:14px;color:#414141;transform:scaleX(0.8991);transform-origin:100% 0;">1,000</div>
<div class="t" style="left:443px;top:765px;font-size:12px;line-height:14px;color:#414141;transform:scaleX(0.8909);transform-origin:0 0;">Склад 2019</div>
<div class="t" style="right:821.5px;top:765px;font-size:12px;line-height:14px;color:#414141;transform:scaleX(0.8991);transform-origin:100% 0;">2,000</div>
<div class="t" style="left:443px;top:784px;font-size:12px;line-height:14px;color:#414141;transform:scaleX(0.9167);transform-origin:0 0;">Ремонт техники</div>
<div class="t" style="right:732px;top:784px;font-size:12px;line-height:14px;color:#414141;transform:scaleX(0.8991);transform-origin:100% 0;">1,000</div>
<div class="t" style="left:443px;top:803px;font-size:12px;line-height:14px;color:#414141;transform:scaleX(0.9167);transform-origin:0 0;">Ремонт техники</div>
<div class="t" style="right:732px;top:803px;font-size:12px;line-height:14px;color:#414141;transform:scaleX(0.8991);transform-origin:100% 0;">1,000</div>
<div class="t" style="left:443px;top:822px;font-size:12px;line-height:14px;color:#414141;transform:scaleX(0.9167);transform-origin:0 0;">Ремонт техники</div>
<div class="t" style="right:732px;top:822px;font-size:12px;line-height:14px;color:#414141;transform:scaleX(0.8991);transform-origin:100% 0;">1,000</div>
<div class="t" style="left:443px;top:841px;font-size:12px;line-height:14px;color:#414141;transform:scaleX(0.8909);transform-origin:0 0;">Склад 2019</div>
<div class="t" style="right:732px;top:841px;font-size:12px;line-height:14px;color:#414141;transform:scaleX(0.8991);transform-origin:100% 0;">1,000</div>
<div class="t" style="left:443px;top:860px;font-size:12px;line-height:14px;color:#414141;transform:scaleX(0.9167);transform-origin:0 0;">Ремонт техники</div>
<div class="t" style="right:821.5px;top:860px;font-size:12px;line-height:14px;color:#414141;transform:scaleX(0.8991);transform-origin:100% 0;">1,000</div>
<div class="t" style="right:732px;top:860px;font-size:12px;line-height:14px;color:#414141;transform:scaleX(0.8991);transform-origin:100% 0;">1,000</div>
<div style="left:24px;top:872px;width:1186px;height:1px;background:#a0a0a0"></div>
<div style="left:24px;top:873px;width:1186px;height:6px;background:#fff"></div>
<div style="left:25px;top:720px;width:13px;height:13px;background:#e4ebf5"></div>
<div style="left:38px;top:720px;width:13px;height:13px;background:#e2ebf6"></div>
<div style="left:51px;top:720px;width:13px;height:13px;background:#dde6f1"></div>
<div style="left:64px;top:720px;width:13px;height:13px;background:#e9f1fb"></div>
<div style="left:77px;top:720px;width:13px;height:13px;background:#e6ebf2"></div>
<div style="left:90px;top:720px;width:13px;height:13px;background:#d9dde4"></div>
<div style="left:103px;top:720px;width:13px;height:13px;background:#d6dae2"></div>
<div style="left:116px;top:720px;width:13px;height:13px;background:#dadde2"></div>
<div style="left:129px;top:720px;width:13px;height:13px;background:#d6d9df"></div>
<div style="left:142px;top:720px;width:13px;height:13px;background:#e0e4ec"></div>
<div style="left:155px;top:720px;width:13px;height:13px;background:#d5dae3"></div>
<div style="left:168px;top:720px;width:13px;height:13px;background:#d6dae2"></div>
<div style="left:181px;top:720px;width:13px;height:13px;background:#d8dde7"></div>
<div style="left:194px;top:720px;width:13px;height:13px;background:#e3e9f2"></div>
<div style="left:207px;top:720px;width:13px;height:13px;background:#e2e7ee"></div>
<div style="left:220px;top:720px;width:13px;height:13px;background:#eaf1f9"></div>
<div style="left:233px;top:720px;width:13px;height:13px;background:#e0e4ec"></div>
<div style="left:246px;top:720px;width:13px;height:13px;background:#e6eaf2"></div>
<div style="left:259px;top:720px;width:13px;height:13px;background:#e4e9f1"></div>
<div style="left:272px;top:720px;width:26px;height:13px;background:#e6eaf2"></div>
<div style="left:298px;top:720px;width:26px;height:13px;background:#e4e8f0"></div>
<div style="left:324px;top:720px;width:13px;height:13px;background:#e2e6ee"></div>
<div style="left:337px;top:720px;width:13px;height:13px;background:#dfe3ea"></div>
<div style="left:350px;top:720px;width:13px;height:13px;background:#e2e6ee"></div>
<div style="left:363px;top:720px;width:13px;height:13px;background:#dfe3ea"></div>
<div style="left:376px;top:720px;width:13px;height:13px;background:#e3e7ee"></div>
<div style="left:389px;top:720px;width:13px;height:13px;background:#dcdfe6"></div>
<div style="left:402px;top:720px;width:13px;height:13px;background:#d8dbe2"></div>
<div style="left:415px;top:720px;width:13px;height:13px;background:#e6ebf3"></div>
<div style="left:428px;top:720px;width:15px;height:13px;background:#eaf1fa"></div>
<div style="left:25px;top:733px;width:13px;height:13px;background:#e6ecf5"></div>
<div style="left:38px;top:733px;width:13px;height:13px;background:#e6eef8"></div>
<div style="left:51px;top:733px;width:13px;height:13px;background:#e2e9f3"></div>
<div style="left:64px;top:733px;width:13px;height:13px;background:#eef5fd"></div>
<div style="left:77px;top:733px;width:13px;height:13px;background:#e8ecf2"></div>
<div style="left:90px;top:733px;width:13px;height:13px;background:#d8dde5"></div>
<div style="left:103px;top:733px;width:13px;height:13px;background:#e0e4ec"></div>
<div style="left:116px;top:733px;width:26px;height:13px;background:#d8dbe0"></div>
<div style="left:142px;top:733px;width:13px;height:13px;background:#e4e8ee"></div>
<div style="left:155px;top:733px;width:13px;height:13px;background:#d8dce5"></div>
<div style="left:168px;top:733px;width:13px;height:13px;background:#d4d9e1"></div>
<div style="left:181px;top:733px;width:13px;height:13px;background:#d8dde7"></div>
<div style="left:194px;top:733px;width:13px;height:13px;background:#e4eaf3"></div>
<div style="left:207px;top:733px;width:13px;height:13px;background:#e6ebf3"></div>
<div style="left:220px;top:733px;width:13px;height:13px;background:#eff5fb"></div>
<div style="left:233px;top:733px;width:13px;height:13px;background:#dcdfe7"></div>
<div style="left:246px;top:733px;width:13px;height:13px;background:#ccd4e0"></div>
<div style="left:259px;top:733px;width:13px;height:13px;background:#dde3ec"></div>
<div style="left:272px;top:733px;width:13px;height:13px;background:#d2d8e2"></div>
<div style="left:285px;top:733px;width:13px;height:13px;background:#dce2ea"></div>
<div style="left:298px;top:733px;width:13px;height:13px;background:#d8dce4"></div>
<div style="left:311px;top:733px;width:13px;height:13px;background:#d6dbe4"></div>
<div style="left:324px;top:733px;width:13px;height:13px;background:#dadee6"></div>
<div style="left:337px;top:733px;width:26px;height:13px;background:#e0e4ea"></div>
<div style="left:363px;top:733px;width:13px;height:13px;background:#e4e8ee"></div>
<div style="left:376px;top:733px;width:13px;height:13px;background:#e8ecf2"></div>
<div style="left:389px;top:733px;width:13px;height:13px;background:#dcdfe6"></div>
<div style="left:402px;top:733px;width:13px;height:13px;background:#d6d9e2"></div>
<div style="left:415px;top:733px;width:13px;height:13px;background:#e8edf5"></div>
<div style="left:428px;top:733px;width:15px;height:13px;background:#eef4fb"></div>
<div style="left:25px;top:746px;width:13px;height:13px;background:#f0f0f0"></div>
<div style="left:38px;top:746px;width:13px;height:13px;background:#fbfbfb"></div>
<div style="left:51px;top:746px;width:13px;height:13px;background:#ececec"></div>
<div style="left:64px;top:746px;width:13px;height:13px;background:#ffffff"></div>
<div style="left:77px;top:746px;width:13px;height:13px;background:#f5f4f2"></div>
<div style="left:90px;top:746px;width:13px;height:13px;background:#d8d6d8"></div>
<div style="left:103px;top:746px;width:13px;height:13px;background:#d2d3da"></div>
<div style="left:116px;top:746px;width:26px;height:13px;background:#dadbde"></div>
<div style="left:142px;top:746px;width:13px;height:13px;background:#dbdce0"></div>
<div style="left:155px;top:746px;width:13px;height:13px;background:#dcdcde"></div>
<div style="left:168px;top:746px;width:13px;height:13px;background:#eceeec"></div>
<div style="left:181px;top:746px;width:26px;height:13px;background:#d9d8da"></div>
<div style="left:207px;top:746px;width:26px;height:13px;background:#ffffff"></div>
<div style="left:233px;top:746px;width:13px;height:13px;background:#dddce0"></div>
<div style="left:246px;top:746px;width:13px;height:13px;background:#d8d8dc"></div>
<div style="left:259px;top:746px;width:13px;height:13px;background:#e6e7ea"></div>
<div style="left:272px;top:746px;width:13px;height:13px;background:#dcdcde"></div>
<div style="left:285px;top:746px;width:13px;height:13px;background:#dedee0"></div>
<div style="left:298px;top:746px;width:13px;height:13px;background:#dcdce0"></div>
<div style="left:311px;top:746px;width:13px;height:13px;background:#f0efec"></div>
<div style="left:324px;top:746px;width:13px;height:13px;background:#dcd9dc"></div>
<div style="left:337px;top:746px;width:13px;height:13px;background:#ececec"></div>
<div style="left:350px;top:746px;width:13px;height:13px;background:#d8d5d5"></div>
<div style="left:363px;top:746px;width:13px;height:13px;background:#d6d3d3"></div>
<div style="left:376px;top:746px;width:13px;height:13px;background:#dedede"></div>
<div style="left:389px;top:746px;width:13px;height:13px;background:#d8d5d0"></div>
<div style="left:402px;top:746px;width:13px;height:13px;background:#f8fafc"></div>
<div style="left:415px;top:746px;width:28px;height:13px;background:#ffffff"></div>
<div style="left:25px;top:759px;width:13px;height:13px;background:#adc6e8"></div>
<div style="left:38px;top:759px;width:13px;height:13px;background:#b0cdf0"></div>
<div style="left:51px;top:759px;width:13px;height:13px;background:#a9c6ea"></div>
<div style="left:64px;top:759px;width:13px;height:13px;background:#b2d0f3"></div>
<div style="left:77px;top:759px;width:13px;height:13px;background:#b0ccee"></div>
<div style="left:90px;top:759px;width:13px;height:13px;background:#acc6e6"></div>
<div style="left:103px;top:759px;width:13px;height:13px;background:#aec8e8"></div>
<div style="left:116px;top:759px;width:13px;height:13px;background:#b0cae8"></div>
<div style="left:129px;top:759px;width:13px;height:13px;background:#aecbec"></div>
<div style="left:142px;top:759px;width:13px;height:13px;background:#b0cae8"></div>
<div style="left:155px;top:759px;width:26px;height:13px;background:#aecbec"></div>
<div style="left:181px;top:759px;width:26px;height:13px;background:#a9bfe2"></div>
<div style="left:207px;top:759px;width:26px;height:13px;background:#b8d4f2"></div>
<div style="left:233px;top:759px;width:13px;height:13px;background:#a9c5e6"></div>
<div style="left:246px;top:759px;width:26px;height:13px;background:#aec8e8"></div>
<div style="left:272px;top:759px;width:39px;height:13px;background:#aec9e9"></div>
<div style="left:311px;top:759px;width:26px;height:13px;background:#b0cbea"></div>
<div style="left:337px;top:759px;width:13px;height:13px;background:#a6bcde"></div>
<div style="left:350px;top:759px;width:26px;height:13px;background:#aac4e4"></div>
<div style="left:376px;top:759px;width:13px;height:13px;background:#a8c3e4"></div>
<div style="left:389px;top:759px;width:13px;height:13px;background:#acc6e6"></div>
<div style="left:402px;top:759px;width:13px;height:13px;background:#a6bedc"></div>
<div style="left:415px;top:759px;width:13px;height:13px;background:#aac2e0"></div>
<div style="left:428px;top:759px;width:15px;height:13px;background:#b8d4f2"></div>
<div style="left:25px;top:772px;width:13px;height:13px;background:#a5c5ea"></div>
<div style="left:38px;top:772px;width:13px;height:13px;background:#a6c9f0"></div>
<div style="left:51px;top:772px;width:13px;height:13px;background:#a2c4ea"></div>
<div style="left:64px;top:772px;width:13px;height:13px;background:#a8cbf2"></div>
<div style="left:77px;top:772px;width:13px;height:13px;background:#a6c8ee"></div>
<div style="left:90px;top:772px;width:13px;height:13px;background:#9ab6d9"></div>
<div style="left:103px;top:772px;width:13px;height:13px;background:#94b2d8"></div>
<div style="left:116px;top:772px;width:26px;height:13px;background:#9ab6d9"></div>
<div style="left:142px;top:772px;width:13px;height:13px;background:#9cb8dc"></div>
<div style="left:155px;top:772px;width:13px;height:13px;background:#98b4d6"></div>
<div style="left:168px;top:772px;width:13px;height:13px;background:#a0c0e6"></div>
<div style="left:181px;top:772px;width:26px;height:13px;background:#9dbbe0"></div>
<div style="left:207px;top:772px;width:26px;height:13px;background:#a8caf0"></div>
<div style="left:233px;top:772px;width:13px;height:13px;background:#98b4d8"></div>
<div style="left:246px;top:772px;width:13px;height:13px;background:#94b0d8"></div>
<div style="left:259px;top:772px;width:13px;height:13px;background:#9cbae0"></div>
<div style="left:272px;top:772px;width:13px;height:13px;background:#96b4d8"></div>
<div style="left:285px;top:772px;width:13px;height:13px;background:#9ab8de"></div>
<div style="left:298px;top:772px;width:13px;height:13px;background:#98b6da"></div>
<div style="left:311px;top:772px;width:13px;height:13px;background:#9ab8dc"></div>
<div style="left:324px;top:772px;width:13px;height:13px;background:#a0c0e4"></div>
<div style="left:337px;top:772px;width:26px;height:13px;background:#a0c0e2"></div>
<div style="left:363px;top:772px;width:13px;height:13px;background:#a0c0e4"></div>
<div style="left:376px;top:772px;width:13px;height:13px;background:#9ebde0"></div>
<div style="left:389px;top:772px;width:13px;height:13px;background:#a0c0e2"></div>
<div style="left:402px;top:772px;width:13px;height:13px;background:#9ab6d8"></div>
<div style="left:415px;top:772px;width:13px;height:13px;background:#a0bee0"></div>
<div style="left:428px;top:772px;width:15px;height:13px;background:#a8caf0"></div>
<div style="left:25px;top:785px;width:13px;height:13px;background:#a2bfe2"></div>
<div style="left:38px;top:785px;width:13px;height:13px;background:#a4c6ec"></div>
<div style="left:51px;top:785px;width:13px;height:13px;background:#98b8de"></div>
<div style="left:64px;top:785px;width:13px;height:13px;background:#a8caf0"></div>
<div style="left:77px;top:785px;width:13px;height:13px;background:#9cbce4"></div>
<div style="left:90px;top:785px;width:13px;height:13px;background:#8caacd"></div>
<div style="left:103px;top:785px;width:13px;height:13px;background:#8eaccf"></div>
<div style="left:116px;top:785px;width:117px;height:13px;background:#a6caf0"></div>
<div style="left:233px;top:785px;width:13px;height:13px;background:#8aa8cf"></div>
<div style="left:246px;top:785px;width:13px;height:13px;background:#86a4cc"></div>
<div style="left:259px;top:785px;width:13px;height:13px;background:#90b0d6"></div>
<div style="left:272px;top:785px;width:13px;height:13px;background:#88a6cc"></div>
<div style="left:285px;top:785px;width:13px;height:13px;background:#8eaed4"></div>
<div style="left:298px;top:785px;width:13px;height:13px;background:#88a8cc"></div>
<div style="left:311px;top:785px;width:13px;height:13px;background:#8cacd0"></div>
<div style="left:324px;top:785px;width:13px;height:13px;background:#8eaed2"></div>
<div style="left:337px;top:785px;width:13px;height:13px;background:#84a2c4"></div>
<div style="left:350px;top:785px;width:13px;height:13px;background:#90b0d6"></div>
<div style="left:363px;top:785px;width:13px;height:13px;background:#86a4c8"></div>
<div style="left:376px;top:785px;width:13px;height:13px;background:#8aa8cc"></div>
<div style="left:389px;top:785px;width:13px;height:13px;background:#8caacf"></div>
<div style="left:402px;top:785px;width:13px;height:13px;background:#84a0c0"></div>
<div style="left:415px;top:785px;width:13px;height:13px;background:#a0c0e6"></div>
<div style="left:428px;top:785px;width:15px;height:13px;background:#a8caf0"></div>
<div style="left:25px;top:798px;width:13px;height:13px;background:#a3c3e8"></div>
<div style="left:38px;top:798px;width:13px;height:13px;background:#a5c7ee"></div>
<div style="left:51px;top:798px;width:13px;height:13px;background:#9cbce0"></div>
<div style="left:64px;top:798px;width:13px;height:13px;background:#a8caf0"></div>
<div style="left:77px;top:798px;width:13px;height:13px;background:#a2c2e8"></div>
<div style="left:90px;top:798px;width:13px;height:13px;background:#9ab8da"></div>
<div style="left:103px;top:798px;width:13px;height:13px;background:#9cb9dc"></div>
<div style="left:116px;top:798px;width:117px;height:13px;background:#a8ccf0"></div>
<div style="left:233px;top:798px;width:13px;height:13px;background:#9ab8dc"></div>
<div style="left:246px;top:798px;width:13px;height:13px;background:#98b6dc"></div>
<div style="left:259px;top:798px;width:13px;height:13px;background:#9cbce0"></div>
<div style="left:272px;top:798px;width:13px;height:13px;background:#9ab8dc"></div>
<div style="left:285px;top:798px;width:13px;height:13px;background:#9ebee2"></div>
<div style="left:298px;top:798px;width:13px;height:13px;background:#9ab8da"></div>
<div style="left:311px;top:798px;width:26px;height:13px;background:#9cbadc"></div>
<div style="left:337px;top:798px;width:13px;height:13px;background:#96b4d6"></div>
<div style="left:350px;top:798px;width:13px;height:13px;background:#9cbce0"></div>
<div style="left:363px;top:798px;width:13px;height:13px;background:#9ab8da"></div>
<div style="left:376px;top:798px;width:13px;height:13px;background:#9ebde0"></div>
<div style="left:389px;top:798px;width:13px;height:13px;background:#9ab8dc"></div>
<div style="left:402px;top:798px;width:13px;height:13px;background:#94b0d0"></div>
<div style="left:415px;top:798px;width:13px;height:13px;background:#a2c2e8"></div>
<div style="left:428px;top:798px;width:15px;height:13px;background:#a8caf0"></div>
<div style="left:25px;top:811px;width:13px;height:13px;background:#cfdff2"></div>
<div style="left:38px;top:811px;width:13px;height:13px;background:#d2e2f6"></div>
<div style="left:51px;top:811px;width:13px;height:13px;background:#ccdcf0"></div>
<div style="left:64px;top:811px;width:13px;height:13px;background:#d2e3f7"></div>
<div style="left:77px;top:811px;width:13px;height:13px;background:#cedef2"></div>
<div style="left:90px;top:811px;width:13px;height:13px;background:#c8d8ea"></div>
<div style="left:103px;top:811px;width:13px;height:13px;background:#c9d9ec"></div>
<div style="left:116px;top:811px;width:117px;height:13px;background:#d0e1f5"></div>
<div style="left:233px;top:811px;width:13px;height:13px;background:#c6d4e8"></div>
<div style="left:246px;top:811px;width:13px;height:13px;background:#c2d0e4"></div>
<div style="left:259px;top:811px;width:13px;height:13px;background:#c8d8ec"></div>
<div style="left:272px;top:811px;width:13px;height:13px;background:#c4d2e6"></div>
<div style="left:285px;top:811px;width:13px;height:13px;background:#c8d6ea"></div>
<div style="left:298px;top:811px;width:13px;height:13px;background:#c6d4e8"></div>
<div style="left:311px;top:811px;width:26px;height:13px;background:#c8d6ea"></div>
<div style="left:337px;top:811px;width:13px;height:13px;background:#c6d6ea"></div>
<div style="left:350px;top:811px;width:26px;height:13px;background:#c8d8ec"></div>
<div style="left:376px;top:811px;width:13px;height:13px;background:#ccdcf0"></div>
<div style="left:389px;top:811px;width:13px;height:13px;background:#c8d8ec"></div>
<div style="left:402px;top:811px;width:13px;height:13px;background:#c4d2e4"></div>
<div style="left:415px;top:811px;width:13px;height:13px;background:#d0e0f4"></div>
<div style="left:428px;top:811px;width:15px;height:13px;background:#d2e3f7"></div>
<div style="left:25px;top:824px;width:13px;height:13px;background:#efefef"></div>
<div style="left:38px;top:824px;width:13px;height:13px;background:#fafafa"></div>
<div style="left:51px;top:824px;width:13px;height:13px;background:#e8e8e8"></div>
<div style="left:64px;top:824px;width:13px;height:13px;background:#ffffff"></div>
<div style="left:77px;top:824px;width:13px;height:13px;background:#f1f1f1"></div>
<div style="left:90px;top:824px;width:13px;height:13px;background:#d2d2d2"></div>
<div style="left:103px;top:824px;width:13px;height:13px;background:#cecece"></div>
<div style="left:116px;top:824px;width:13px;height:13px;background:#f0f0f2"></div>
<div style="left:129px;top:824px;width:104px;height:13px;background:#ffffff"></div>
<div style="left:233px;top:824px;width:13px;height:13px;background:#dcd8da"></div>
<div style="left:246px;top:824px;width:13px;height:13px;background:#d8d8dc"></div>
<div style="left:259px;top:824px;width:13px;height:13px;background:#e8e8ea"></div>
<div style="left:272px;top:824px;width:13px;height:13px;background:#dcdcdc"></div>
<div style="left:285px;top:824px;width:13px;height:13px;background:#e0e2e4"></div>
<div style="left:298px;top:824px;width:13px;height:13px;background:#d9d6d6"></div>
<div style="left:311px;top:824px;width:13px;height:13px;background:#dcdcdc"></div>
<div style="left:324px;top:824px;width:13px;height:13px;background:#dedcdc"></div>
<div style="left:337px;top:824px;width:13px;height:13px;background:#d6d6d6"></div>
<div style="left:350px;top:824px;width:13px;height:13px;background:#e8e8e8"></div>
<div style="left:363px;top:824px;width:13px;height:13px;background:#dcdcdc"></div>
<div style="left:376px;top:824px;width:13px;height:13px;background:#eeeceb"></div>
<div style="left:389px;top:824px;width:13px;height:13px;background:#dcdada"></div>
<div style="left:402px;top:824px;width:13px;height:13px;background:#cfcfd0"></div>
<div style="left:415px;top:824px;width:13px;height:13px;background:#f2f2f4"></div>
<div style="left:428px;top:824px;width:15px;height:13px;background:#ffffff"></div>
<div style="left:25px;top:837px;width:13px;height:13px;background:#a4c2e6"></div>
<div style="left:38px;top:837px;width:13px;height:13px;background:#a6c8ee"></div>
<div style="left:51px;top:837px;width:13px;height:13px;background:#9fbfe4"></div>
<div style="left:64px;top:837px;width:13px;height:13px;background:#a8cbf2"></div>
<div style="left:77px;top:837px;width:13px;height:13px;background:#a0c0e6"></div>
<div style="left:90px;top:837px;width:13px;height:13px;background:#92accc"></div>
<div style="left:103px;top:837px;width:13px;height:13px;background:#94b0d2"></div>
<div style="left:116px;top:837px;width:13px;height:13px;background:#9ab8da"></div>
<div style="left:129px;top:837px;width:13px;height:13px;background:#8eaad0"></div>
<div style="left:142px;top:837px;width:13px;height:13px;background:#9cbae0"></div>
<div style="left:155px;top:837px;width:13px;height:13px;background:#92aed0"></div>
<div style="left:168px;top:837px;width:39px;height:13px;background:#98b4d6"></div>
<div style="left:207px;top:837px;width:13px;height:13px;background:#a0bde0"></div>
<div style="left:220px;top:837px;width:13px;height:13px;background:#a8caf0"></div>
<div style="left:233px;top:837px;width:13px;height:13px;background:#9ab6da"></div>
<div style="left:246px;top:837px;width:13px;height:13px;background:#98b4da"></div>
<div style="left:259px;top:837px;width:13px;height:13px;background:#9cbae0"></div>
<div style="left:272px;top:837px;width:13px;height:13px;background:#96b4d8"></div>
<div style="left:285px;top:837px;width:13px;height:13px;background:#9cbade"></div>
<div style="left:298px;top:837px;width:13px;height:13px;background:#98b6d8"></div>
<div style="left:311px;top:837px;width:26px;height:13px;background:#9ab8da"></div>
<div style="left:337px;top:837px;width:13px;height:13px;background:#94b0d0"></div>
<div style="left:350px;top:837px;width:13px;height:13px;background:#9cbade"></div>
<div style="left:363px;top:837px;width:13px;height:13px;background:#94b0d2"></div>
<div style="left:376px;top:837px;width:13px;height:13px;background:#9ab8da"></div>
<div style="left:389px;top:837px;width:13px;height:13px;background:#9cbadc"></div>
<div style="left:402px;top:837px;width:13px;height:13px;background:#92aed0"></div>
<div style="left:415px;top:837px;width:13px;height:13px;background:#a2c2e6"></div>
<div style="left:428px;top:837px;width:15px;height:13px;background:#a8caf0"></div>
<div style="left:25px;top:850px;width:13px;height:13px;background:#a5c5ea"></div>
<div style="left:38px;top:850px;width:13px;height:13px;background:#a6c8ee"></div>
<div style="left:51px;top:850px;width:13px;height:13px;background:#a4c5ea"></div>
<div style="left:64px;top:850px;width:13px;height:13px;background:#a8cbf2"></div>
<div style="left:77px;top:850px;width:13px;height:13px;background:#a6c7ec"></div>
<div style="left:90px;top:850px;width:13px;height:13px;background:#a0c0e4"></div>
<div style="left:103px;top:850px;width:13px;height:13px;background:#a2c2e6"></div>
<div style="left:116px;top:850px;width:39px;height:13px;background:#a2c0e4"></div>
<div style="left:155px;top:850px;width:26px;height:13px;background:#a0bee2"></div>
<div style="left:181px;top:850px;width:26px;height:13px;background:#a2c0e4"></div>
<div style="left:207px;top:850px;width:13px;height:13px;background:#a4c4e8"></div>
<div style="left:220px;top:850px;width:13px;height:13px;background:#a6c8ee"></div>
<div style="left:233px;top:850px;width:13px;height:13px;background:#a2c0e4"></div>
<div style="left:246px;top:850px;width:13px;height:13px;background:#a0bee4"></div>
<div style="left:259px;top:850px;width:13px;height:13px;background:#a4c4ea"></div>
<div style="left:272px;top:850px;width:13px;height:13px;background:#a2c0e6"></div>
<div style="left:285px;top:850px;width:13px;height:13px;background:#a4c4e8"></div>
<div style="left:298px;top:850px;width:26px;height:13px;background:#a2c2e6"></div>
<div style="left:324px;top:850px;width:13px;height:13px;background:#a4c4e8"></div>
<div style="left:337px;top:850px;width:13px;height:13px;background:#a2c2e6"></div>
<div style="left:350px;top:850px;width:13px;height:13px;background:#a4c4e8"></div>
<div style="left:363px;top:850px;width:26px;height:13px;background:#a2c2e6"></div>
<div style="left:389px;top:850px;width:13px;height:13px;background:#a4c4e8"></div>
<div style="left:402px;top:850px;width:13px;height:13px;background:#9ebcde"></div>
<div style="left:415px;top:850px;width:13px;height:13px;background:#a6c6ec"></div>
<div style="left:428px;top:850px;width:15px;height:13px;background:#a8caf0"></div>
<div style="left:25px;top:863px;width:13px;height:9px;background:#9cb8da"></div>
<div style="left:38px;top:863px;width:13px;height:9px;background:#a2c4ea"></div>
<div style="left:51px;top:863px;width:13px;height:9px;background:#90b0d4"></div>
<div style="left:64px;top:863px;width:13px;height:9px;background:#a8caf0"></div>
<div style="left:77px;top:863px;width:13px;height:9px;background:#9cbbde"></div>
<div style="left:90px;top:863px;width:13px;height:9px;background:#809cbe"></div>
<div style="left:103px;top:863px;width:13px;height:9px;background:#88a4c6"></div>
<div style="left:116px;top:863px;width:13px;height:9px;background:#869cbc"></div>
<div style="left:129px;top:863px;width:13px;height:9px;background:#8eacd0"></div>
<div style="left:142px;top:863px;width:13px;height:9px;background:#88a2c2"></div>
<div style="left:155px;top:863px;width:13px;height:9px;background:#869ebe"></div>
<div style="left:168px;top:863px;width:13px;height:9px;background:#90b0d0"></div>
<div style="left:181px;top:863px;width:13px;height:9px;background:#86a0c8"></div>
<div style="left:194px;top:863px;width:13px;height:9px;background:#9cbce2"></div>
<div style="left:207px;top:863px;width:26px;height:9px;background:#a6caf0"></div>
<div style="left:233px;top:863px;width:13px;height:9px;background:#88a2c4"></div>
<div style="left:246px;top:863px;width:13px;height:9px;background:#8098c0"></div>
<div style="left:259px;top:863px;width:13px;height:9px;background:#8eaad0"></div>
<div style="left:272px;top:863px;width:13px;height:9px;background:#869fc2"></div>
<div style="left:285px;top:863px;width:13px;height:9px;background:#8caad0"></div>
<div style="left:298px;top:863px;width:13px;height:9px;background:#869ec0"></div>
<div style="left:311px;top:863px;width:13px;height:9px;background:#88a0c2"></div>
<div style="left:324px;top:863px;width:13px;height:9px;background:#8aa6c8"></div>
<div style="left:337px;top:863px;width:13px;height:9px;background:#8eaccf"></div>
<div style="left:350px;top:863px;width:13px;height:9px;background:#90b0d2"></div>
<div style="left:363px;top:863px;width:13px;height:9px;background:#90b0d4"></div>
<div style="left:376px;top:863px;width:13px;height:9px;background:#88a6c6"></div>
<div style="left:389px;top:863px;width:13px;height:9px;background:#86a2c0"></div>
<div style="left:402px;top:863px;width:13px;height:9px;background:#98b8de"></div>
<div style="left:415px;top:863px;width:13px;height:9px;background:#9cbce0"></div>
<div style="left:428px;top:863px;width:15px;height:9px;background:#a8caf0"></div>
<div style="left:1192px;top:721px;width:14px;height:12px;background:#dcdcdc"></div>
<div style="left:1192px;top:733px;width:14px;height:13px;background:#c8c8c8"></div>
<div style="left:1192px;top:746px;width:14px;height:13px;background:#d0d0d0"></div>
<div style="left:1192px;top:759px;width:14px;height:13px;background:#b4bcc8"></div>
<div style="left:1192px;top:772px;width:14px;height:13px;background:#b0b8c4"></div>
<div style="left:1192px;top:785px;width:14px;height:13px;background:#b0b8c4"></div>
<div style="left:1192px;top:798px;width:14px;height:13px;background:#b2bac6"></div>
<div style="left:1192px;top:811px;width:14px;height:13px;background:#ccd0d6"></div>
<div style="left:1192px;top:824px;width:14px;height:13px;background:#ececec"></div>
<div style="left:1192px;top:837px;width:14px;height:13px;background:#d4dce8"></div>
<div style="left:1192px;top:850px;width:14px;height:10px;background:#e0e8f2"></div>
<div style="left:1205px;top:733px;width:2px;height:91px;background:#a4a4a4"></div>
<svg style="left:1199px;top:711px" width="8" height="5" viewBox="0 0 8 5"><path d="M0.5 4.5 L4 0.8 L7.5 4.5 Z" fill="#c8c8c8"/></svg>
<svg style="left:1199px;top:860px" width="7" height="4" viewBox="0 0 7 4"><path d="M0.5 0.3 H6.5 L3.5 3.7 Z" fill="#333"/></svg>
<svg style="left:1060px;top:345px" width="130" height="105" viewBox="1060 345 130 105"><polygon points="1065,385 1141,385 1107,351 1140,351 1185.5,397 1140,443 1107,443 1141,409 1065,409" fill="#d96344"/></svg>
<div style="left:1210px;top:93px;width:691px;height:784px;background:#fff;border:2px solid #ea0a14"></div>
<div style="left:1214px;top:98px;width:1px;height:775px;background:repeating-linear-gradient(180deg,#d6d6d6 0,#d6d6d6 4px,transparent 4px,transparent 6px);"></div>
<div class="t" style="left:1219px;top:99px;font-size:13px;line-height:15px;color:#009646;transform:scaleX(0.9669);transform-origin:0 0;">Информация об объекте</div>
<div style="left:1219px;top:118px;width:675px;height:755px;border:1px solid #a0a0a0;background:#fff;"></div>
<div class="t" style="left:1228px;top:128px;font-size:16px;line-height:17px;color:#000;font-family:'Liberation Serif',serif;"><b>Контрагент:</b></div>
<div class="t" style="left:1228px;top:148px;font-size:16px;line-height:17px;color:#000;font-family:'Liberation Serif',serif;transform:scaleX(0.9797);transform-origin:0 0;"><b>Объект:</b> <a>3943 Xerox VersaLink B405</a></div>
<div class="t" style="left:1228px;top:184px;font-size:16px;line-height:17px;color:#000;font-family:'Liberation Serif',serif;transform:scaleX(0.9990);transform-origin:0 0;"><b>Описание проблемы:</b> так же застревание при двусторонней печати Е</div>
<div class="t" style="left:1228px;top:220px;font-size:16px;line-height:17px;color:#000;font-family:'Liberation Serif',serif;transform:scaleX(0.9965);transform-origin:0 0;"><b>Срочность:</b> Срочный</div>
<div class="t" style="left:1228px;top:256px;font-size:16px;line-height:17px;color:#000;font-family:'Liberation Serif',serif;transform:scaleX(1.0049);transform-origin:0 0;"><b>Комплектность:</b> Картридж Драмкартридж</div>
<div class="t" style="left:1228px;top:292px;font-size:16px;line-height:17px;color:#000;font-family:'Liberation Serif',serif;transform:scaleX(0.9934);transform-origin:0 0;"><b>Результат диагностики:</b></div>
<div class="t" style="left:1228px;top:312px;font-size:16px;line-height:17px;color:#000;font-family:'Liberation Serif',serif;transform:scaleX(0.9789);transform-origin:0 0;">13.11.2025 10:59:58</div>
<div class="t" style="left:1228px;top:332.4px;font-size:16px;line-height:17px;color:#000;font-family:'Liberation Serif',serif;transform:scaleX(1.0099);transform-origin:0 0;">При первичном тестировании застреваний не было, даже записал видео работы.</div>
<div class="t" style="left:1228px;top:352.5px;font-size:16px;line-height:17px;color:#000;font-family:'Liberation Serif',serif;transform:scaleX(1.0015);transform-origin:0 0;">Затем застревания проявились, но характер застреваний другой. При прошлом ремонте принтер</div>
<div class="t" style="left:1228px;top:372.5px;font-size:16px;line-height:17px;color:#000;font-family:'Liberation Serif',serif;transform:scaleX(1.0063);transform-origin:0 0;">не мог распечатать даже одного листа при включении.</div>
<div class="t" style="left:1228px;top:392.3px;font-size:16px;line-height:17px;color:#000;font-family:'Liberation Serif',serif;transform:scaleX(0.9964);transform-origin:0 0;">Обнаружился износ втулок узла выхода. Отдельно не поставляются, требуется замена в сборе.</div>
<div class="t" style="left:1228px;top:411.8px;font-size:16px;line-height:17px;color:#000;font-family:'Liberation Serif',serif;transform:scaleX(0.9872);transform-origin:0 0;">Так же рекомендуется замена узла дуплекса, т.к. там так же изношены втулки.</div>
<div style="left:1310px;top:127px;width:13px;height:13px;background:#eeeef2"></div>
<div style="left:1323px;top:127px;width:13px;height:13px;background:#c4c4f4"></div>
<div style="left:1336px;top:127px;width:13px;height:13px;background:#dcdcf8"></div>
<div style="left:1349px;top:127px;width:13px;height:13px;background:#d8d8f8"></div>
<div style="left:1362px;top:127px;width:13px;height:13px;background:#d8d8f6"></div>
<div style="left:1375px;top:127px;width:13px;height:13px;background:#e2e2fa"></div>
<div style="left:1388px;top:127px;width:13px;height:13px;background:#d8d8f8"></div>
<div style="left:1401px;top:127px;width:13px;height:13px;background:#d6d6f6"></div>
<div style="left:1414px;top:127px;width:13px;height:13px;background:#ccccf6"></div>
<div style="left:1427px;top:127px;width:13px;height:13px;background:#d0d0f4"></div>
<div style="left:1440px;top:127px;width:13px;height:13px;background:#e6e6fa"></div>
<div style="left:1453px;top:127px;width:13px;height:13px;background:#c4c4f2"></div>
<div style="left:1466px;top:127px;width:13px;height:13px;background:#d8dafa"></div>
<div style="left:1479px;top:127px;width:26px;height:13px;background:#ccccf4"></div>
<div style="left:1505px;top:127px;width:13px;height:13px;background:#d0d0f4"></div>
<div style="left:1310px;top:140px;width:13px;height:6px;background:#e4e4ec"></div>
<div style="left:1323px;top:140px;width:13px;height:6px;background:#b4b4f0"></div>
<div style="left:1336px;top:140px;width:13px;height:6px;background:#bcbcf0"></div>
<div style="left:1349px;top:140px;width:13px;height:6px;background:#a8a8ec"></div>
<div style="left:1362px;top:140px;width:13px;height:6px;background:#b0b0ee"></div>
<div style="left:1375px;top:140px;width:13px;height:6px;background:#b8b8f0"></div>
<div style="left:1388px;top:140px;width:13px;height:6px;background:#b4b4f0"></div>
<div style="left:1401px;top:140px;width:13px;height:6px;background:#9c9cec"></div>
<div style="left:1414px;top:140px;width:13px;height:6px;background:#a8a8ec"></div>
<div style="left:1427px;top:140px;width:13px;height:6px;background:#a8a8ee"></div>
<div style="left:1440px;top:140px;width:13px;height:6px;background:#c0c0f2"></div>
<div style="left:1453px;top:140px;width:39px;height:6px;background:#b4b4f0"></div>
<div style="left:1492px;top:140px;width:13px;height:6px;background:#b0b0ee"></div>
<div style="left:1505px;top:140px;width:13px;height:6px;background:#b8b8f0"></div>
<div style="left:1704px;top:185px;width:13px;height:13px;background:#c8c8c8"></div>
<div style="left:1717px;top:185px;width:13px;height:13px;background:#d0d0d0"></div>
<div style="left:1730px;top:185px;width:12px;height:13px;background:#dcdcdc"></div>
<div style="left:1704px;top:198px;width:13px;height:13px;background:#ffffff"></div>
<div style="left:1717px;top:198px;width:13px;height:13px;background:#f4f4f4"></div>
<div style="left:1730px;top:198px;width:12px;height:13px;background:#f8f8f8"></div>
<div style="left:1359px;top:309px;width:13px;height:13px;background:#f0f0f0"></div>
<div style="left:1372px;top:309px;width:13px;height:13px;background:#dedede"></div>
<div style="left:1385px;top:309px;width:13px;height:13px;background:#e0e0e0"></div>
<div style="left:1398px;top:309px;width:13px;height:13px;background:#e2e2e2"></div>
<div style="left:1411px;top:309px;width:13px;height:13px;background:#e4e4e4"></div>
<div style="left:1424px;top:309px;width:13px;height:13px;background:#e0e0e0"></div>
<div style="left:1437px;top:309px;width:13px;height:13px;background:#d8d8d8"></div>
<div style="left:1450px;top:309px;width:13px;height:13px;background:#e4e4e4"></div>
<div style="left:1463px;top:309px;width:13px;height:13px;background:#f6f6f8"></div>
<div style="left:1476px;top:309px;width:13px;height:13px;background:#d4d4f8"></div>
<div style="left:1489px;top:309px;width:13px;height:13px;background:#e4e4fa"></div>
<div style="left:1502px;top:309px;width:13px;height:13px;background:#e2e2fa"></div>
<div style="left:1515px;top:309px;width:13px;height:13px;background:#eaeafc"></div>
<div style="left:1528px;top:309px;width:13px;height:13px;background:#e0e0fa"></div>
<div style="left:1541px;top:309px;width:13px;height:13px;background:#e6e6fc"></div>
<div style="left:1554px;top:309px;width:13px;height:13px;background:#ececfc"></div>
<div style="left:1567px;top:309px;width:13px;height:13px;background:#e0e0fa"></div>
<div style="left:1580px;top:309px;width:26px;height:13px;background:#e4e4fa"></div>
<div style="left:1606px;top:309px;width:13px;height:13px;background:#e2e2fa"></div>
<div style="left:1619px;top:309px;width:13px;height:13px;background:#e4e4fa"></div>
<div style="left:1632px;top:309px;width:13px;height:13px;background:#ececfc"></div>
<div style="left:1645px;top:309px;width:13px;height:13px;background:#eaeafc"></div>
<div style="left:1658px;top:309px;width:13px;height:13px;background:#d8d8f8"></div>
<div style="left:1671px;top:309px;width:13px;height:13px;background:#ececfc"></div>
<div style="left:1684px;top:309px;width:13px;height:13px;background:#eaeafc"></div>
<div style="left:1697px;top:309px;width:13px;height:13px;background:#ccccf6"></div>
<div style="left:1710px;top:309px;width:13px;height:13px;background:#d8d8f8"></div>
<div style="left:1723px;top:309px;width:13px;height:13px;background:#ececfc"></div>
<div style="left:1359px;top:322px;width:13px;height:13px;background:#ececec"></div>
<div style="left:1372px;top:322px;width:13px;height:13px;background:#dcdcdc"></div>
<div style="left:1385px;top:322px;width:13px;height:13px;background:#d6d4d4"></div>
<div style="left:1398px;top:322px;width:13px;height:13px;background:#d8d8d8"></div>
<div style="left:1411px;top:322px;width:13px;height:13px;background:#dcdcdc"></div>
<div style="left:1424px;top:322px;width:13px;height:13px;background:#e4e4e4"></div>
<div style="left:1437px;top:322px;width:13px;height:13px;background:#dedede"></div>
<div style="left:1450px;top:322px;width:13px;height:13px;background:#dadada"></div>
<div style="left:1463px;top:322px;width:13px;height:13px;background:#e0e0e8"></div>
<div style="left:1476px;top:322px;width:13px;height:13px;background:#c0c0f6"></div>
<div style="left:1489px;top:322px;width:13px;height:13px;background:#c4c4f6"></div>
<div style="left:1502px;top:322px;width:13px;height:13px;background:#c6c6f6"></div>
<div style="left:1515px;top:322px;width:13px;height:13px;background:#ccccf6"></div>
<div style="left:1528px;top:322px;width:13px;height:13px;background:#d0d0f6"></div>
<div style="left:1541px;top:322px;width:13px;height:13px;background:#c4c4f4"></div>
<div style="left:1554px;top:322px;width:13px;height:13px;background:#d0d0f6"></div>
<div style="left:1567px;top:322px;width:13px;height:13px;background:#d4d4f8"></div>
<div style="left:1580px;top:322px;width:13px;height:13px;background:#c0c0f4"></div>
<div style="left:1593px;top:322px;width:13px;height:13px;background:#c4c4f6"></div>
<div style="left:1606px;top:322px;width:13px;height:13px;background:#c0c0f4"></div>
<div style="left:1619px;top:322px;width:26px;height:13px;background:#dcdcf8"></div>
<div style="left:1645px;top:322px;width:13px;height:13px;background:#dedefa"></div>
<div style="left:1658px;top:322px;width:13px;height:13px;background:#d4d4f8"></div>
<div style="left:1671px;top:322px;width:13px;height:13px;background:#d8d8f8"></div>
<div style="left:1684px;top:322px;width:13px;height:13px;background:#dcdcf8"></div>
<div style="left:1697px;top:322px;width:13px;height:13px;background:#c8c8f4"></div>
<div style="left:1710px;top:322px;width:13px;height:13px;background:#d0d0f6"></div>
<div style="left:1723px;top:322px;width:13px;height:13px;background:#e8e8fc"></div>
<div style="left:2px;top:892px;width:1920px;height:1px;background:#a8a8a8"></div>
<div style="left:2px;top:893px;width:1920px;height:31px;background:#f2f2f2"></div>
<div style="left:177px;top:893px;width:1px;height:31px;background:#b8b8b8"></div>
<div style="left:178px;top:893px;width:159px;height:31px;background:#fff"></div>
<div style="left:337px;top:893px;width:1px;height:31px;background:#b8b8b8"></div>
<div style="left:181px;top:920px;width:153px;height:2px;background:#009646"></div>
<svg style="left:11px;top:900px" width="17" height="14" viewBox="0 0 17 14"><path d="M8.5 0.8 L16 7.6 H13.6 V13.4 H10 V9 H7 V13.4 H3.4 V7.6 H1 Z" fill="#4a4a4a"/></svg>
<div class="t" style="left:38px;top:900px;font-size:14px;line-height:16px;color:#333;transform:scaleX(0.9050);transform-origin:0 0;">Начальная страница</div>
<div class="t" style="left:187.8px;top:900px;font-size:14px;line-height:16px;color:#333;transform:scaleX(0.9377);transform-origin:0 0;">РМ Менеджера ПРО</div>
<svg style="left:321px;top:904px" width="10" height="10" viewBox="0 0 10 10" stroke="#444" stroke-width="1.8" fill="none"><path d="M1.5 1.5 L8.5 8.5 M8.5 1.5 L1.5 8.5"/></svg>
</div></body></html>
